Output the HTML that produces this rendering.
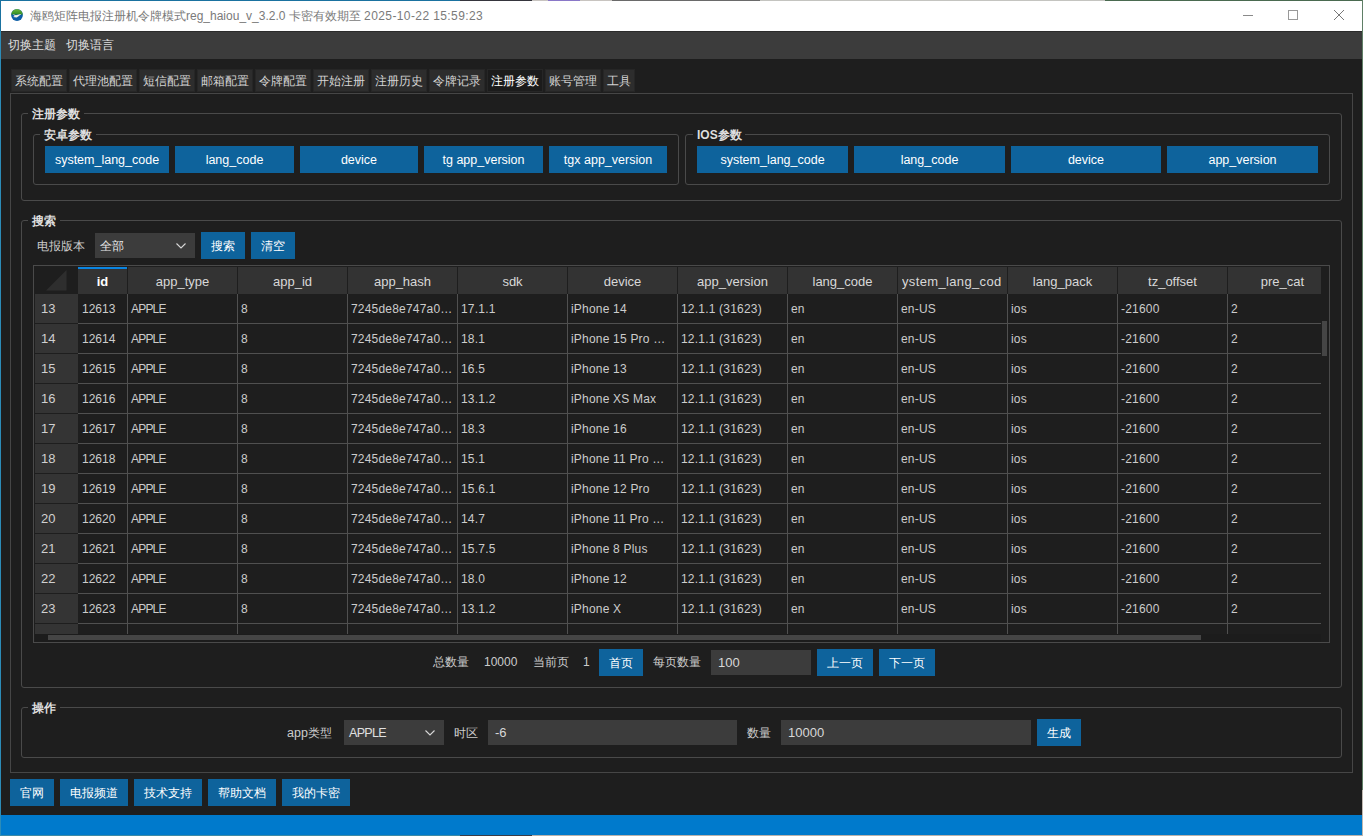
<!DOCTYPE html>
<html><head><meta charset="utf-8"><style>
html,body{margin:0;padding:0;width:1363px;height:836px;overflow:hidden;background:#1e1e1e}
body{position:relative;font-family:"Liberation Sans",sans-serif;font-size:12px;color:#cccccc}
div{position:absolute;box-sizing:border-box}
.t{white-space:nowrap;line-height:14px}
.c{text-align:center;white-space:nowrap}
</style></head><body>
<div style="left:0px;top:0px;width:1363px;height:836px;background:#2c8cb8"></div>
<div style="left:0px;top:0px;width:1px;height:31px;background:#1a72a0"></div>
<div style="left:0px;top:0px;width:460px;height:1px;background:#1a72a0"></div>
<div style="left:460px;top:0px;width:72px;height:1px;background:#35353d"></div>
<div style="left:532px;top:0px;width:16px;height:1px;background:#c8c4c0"></div>
<div style="left:548px;top:0px;width:32px;height:1px;background:#8a78c8"></div>
<div style="left:580px;top:0px;width:32px;height:1px;background:#c8c4c0"></div>
<div style="left:612px;top:0px;width:148px;height:1px;background:#6a6a6a"></div>
<div style="left:760px;top:0px;width:345px;height:1px;background:#c4c4c0"></div>
<div style="left:1105px;top:0px;width:257px;height:1px;background:#4a6a50"></div>
<div style="left:1px;top:835px;width:459px;height:1px;background:#3c8aa6"></div>
<div style="left:460px;top:835px;width:72px;height:1px;background:#3c3c44"></div>
<div style="left:532px;top:835px;width:831px;height:1px;background:#b8b2ac"></div>
<div style="left:1px;top:1px;width:1361px;height:30px;background:#ffffff"></div>
<div style="left:1px;top:31px;width:1361px;height:1px;background:#2b2b2b"></div>
<div style="left:1px;top:32px;width:1361px;height:27px;background:#3c3c3c"></div>
<div style="left:1px;top:59px;width:1361px;height:756px;background:#1e1e1e"></div>
<div style="left:1px;top:815px;width:1361px;height:20px;background:#007acc"></div>
<div style="left:1362px;top:0px;width:1px;height:790px;background:#5f7f66"></div>
<div style="left:1362px;top:790px;width:1px;height:46px;background:#bfb8b0"></div>
<svg style="position:absolute;left:11px;top:9px" width="12" height="12" viewBox="0 0 12 12">
<defs><clipPath id="cc"><circle cx="6" cy="6" r="5.9"/></clipPath><linearGradient id="gg" x1="0" y1="0" x2="0" y2="1"><stop offset="0" stop-color="#6cb83c"/><stop offset="1" stop-color="#2e8a22"/></linearGradient></defs>
<g clip-path="url(#cc)"><rect width="12" height="12" fill="#0d5ea6"/><path d="M0 5.6 Q0.5 0 6 0 Q11.5 0 12 5.6 Z" fill="url(#gg)"/>
<path d="M1.6 5.0 L4.9 6.3 L10.6 4.8 L7.2 7.5 L5.7 8.6 L2.0 8.1 L3.8 7.1 Z" fill="#f8f4e6"/></g></svg>
<div class="t" style="left:30px;top:9px;color:#7a7a7a;font-size:12px">海鸥矩阵电报注册机令牌模式reg_haiou_v_3.2.0 卡密有效期至 <span style="letter-spacing:0.4px">2025-10-22 15:59:23</span></div>
<div style="left:1243px;top:15px;width:10px;height:1px;background:#8a8a8a"></div>
<div style="left:1288px;top:10px;width:10px;height:10px;border:1px solid #999"></div>
<svg style="position:absolute;left:1334px;top:10px" width="10" height="10" viewBox="0 0 10 10"><path d="M0 0 L10 10 M10 0 L0 10" stroke="#777" stroke-width="1"/></svg>
<div class="t" style="left:8px;top:38px;color:#e0e0e0">切换主题</div>
<div class="t" style="left:66px;top:38px;color:#e0e0e0">切换语言</div>
<div class="c" style="left:11px;top:69px;width:56px;height:23px;line-height:23px;background:#2d2d2d;border:1px solid #262626;line-height:22px;color:#d4d4d4">系统配置</div>
<div class="c" style="left:69px;top:69px;width:68px;height:23px;line-height:23px;background:#2d2d2d;border:1px solid #262626;line-height:22px;color:#d4d4d4">代理池配置</div>
<div class="c" style="left:139px;top:69px;width:56px;height:23px;line-height:23px;background:#2d2d2d;border:1px solid #262626;line-height:22px;color:#d4d4d4">短信配置</div>
<div class="c" style="left:197px;top:69px;width:56px;height:23px;line-height:23px;background:#2d2d2d;border:1px solid #262626;line-height:22px;color:#d4d4d4">邮箱配置</div>
<div class="c" style="left:255px;top:69px;width:56px;height:23px;line-height:23px;background:#2d2d2d;border:1px solid #262626;line-height:22px;color:#d4d4d4">令牌配置</div>
<div class="c" style="left:313px;top:69px;width:56px;height:23px;line-height:23px;background:#2d2d2d;border:1px solid #262626;line-height:22px;color:#d4d4d4">开始注册</div>
<div class="c" style="left:371px;top:69px;width:56px;height:23px;line-height:23px;background:#2d2d2d;border:1px solid #262626;line-height:22px;color:#d4d4d4">注册历史</div>
<div class="c" style="left:429px;top:69px;width:56px;height:23px;line-height:23px;background:#2d2d2d;border:1px solid #262626;line-height:22px;color:#d4d4d4">令牌记录</div>
<div class="c" style="left:487px;top:69px;width:56px;height:23px;line-height:23px;background:#1b1b1b;border:1px solid #262626;line-height:22px;color:#ffffff">注册参数</div>
<div class="c" style="left:545px;top:69px;width:56px;height:23px;line-height:23px;background:#2d2d2d;border:1px solid #262626;line-height:22px;color:#d4d4d4">账号管理</div>
<div class="c" style="left:603px;top:69px;width:32px;height:23px;line-height:23px;background:#2d2d2d;border:1px solid #262626;line-height:22px;color:#d4d4d4">工具</div>
<div style="left:10px;top:93px;width:1343px;height:680px;border:1px solid #464646"></div>
<div style="left:21px;top:113px;width:1321px;height:88px;border:1px solid #4a4a4a;border-radius:3px"></div>
<div style="left:28px;top:111px;width:56px;height:4px;background:#1e1e1e"></div>
<div class="t" style="left:32px;top:107px;color:#dedede;font-weight:bold;">注册参数</div>
<div style="left:33px;top:134px;width:646px;height:51px;border:1px solid #4a4a4a;border-radius:3px"></div>
<div style="left:40px;top:132px;width:56px;height:4px;background:#1e1e1e"></div>
<div class="t" style="left:44px;top:128px;color:#dedede;font-weight:bold;">安卓参数</div>
<div style="left:685px;top:134px;width:645px;height:51px;border:1px solid #4a4a4a;border-radius:3px"></div>
<div style="left:693px;top:132px;width:52px;height:4px;background:#1e1e1e"></div>
<div class="t" style="left:697px;top:128px;color:#dedede;font-weight:bold;"><span style="font-size:12px;font-weight:bold">IOS</span>参数</div>
<div class="c" style="left:45px;top:146px;width:124px;height:27px;line-height:27px;background:#0e639c;color:#fff;font-size:12.5px;line-height:29px">system_lang_code</div>
<div class="c" style="left:175px;top:146px;width:119px;height:27px;line-height:27px;background:#0e639c;color:#fff;font-size:12.5px;line-height:29px">lang_code</div>
<div class="c" style="left:300px;top:146px;width:118px;height:27px;line-height:27px;background:#0e639c;color:#fff;font-size:12.5px;line-height:29px">device</div>
<div class="c" style="left:424px;top:146px;width:119px;height:27px;line-height:27px;background:#0e639c;color:#fff;font-size:12.5px;line-height:29px">tg app_version</div>
<div class="c" style="left:549px;top:146px;width:118px;height:27px;line-height:27px;background:#0e639c;color:#fff;font-size:12.5px;line-height:29px">tgx app_version</div>
<div class="c" style="left:697px;top:146px;width:151px;height:27px;line-height:27px;background:#0e639c;color:#fff;font-size:12.5px;line-height:29px">system_lang_code</div>
<div class="c" style="left:854px;top:146px;width:151px;height:27px;line-height:27px;background:#0e639c;color:#fff;font-size:12.5px;line-height:29px">lang_code</div>
<div class="c" style="left:1011px;top:146px;width:150px;height:27px;line-height:27px;background:#0e639c;color:#fff;font-size:12.5px;line-height:29px">device</div>
<div class="c" style="left:1167px;top:146px;width:151px;height:27px;line-height:27px;background:#0e639c;color:#fff;font-size:12.5px;line-height:29px">app_version</div>
<div style="left:21px;top:220px;width:1321px;height:468px;border:1px solid #4a4a4a;border-radius:3px"></div>
<div style="left:28px;top:218px;width:32px;height:4px;background:#1e1e1e"></div>
<div class="t" style="left:32px;top:214px;color:#dedede;font-weight:bold;">搜索</div>
<div class="t" style="left:37px;top:239px;">电报版本</div>
<div style="left:95px;top:233px;width:100px;height:25px;background:#3c3c3c"></div>
<div class="t" style="left:100px;top:239px;color:#e8e8e8">全部</div>
<svg style="position:absolute;left:175px;top:242px" width="12" height="8" viewBox="0 0 12 8"><path d="M1.5 1.5 L6 6 L10.5 1.5" stroke="#d8d8d8" fill="none" stroke-width="1.1"/></svg>
<div class="c" style="left:201px;top:232px;width:44px;height:27px;line-height:27px;background:#0e639c;color:#fff;line-height:29px">搜索</div>
<div class="c" style="left:251px;top:232px;width:44px;height:27px;line-height:27px;background:#0e639c;color:#fff;line-height:29px">清空</div>
<div style="left:33px;top:265px;width:1297px;height:378px;border:1px solid #4a4a4a"></div>
<div style="left:35px;top:267px;width:43px;height:27px;background:#1e1e1e"></div>
<svg style="position:absolute;left:46px;top:270px" width="21" height="21" viewBox="0 0 21 21"><path d="M0 20.5 L20.5 0 L20.5 20.5 Z" fill="#2e2e2e"/></svg>
<div style="left:78px;top:267px;width:49px;height:27px;background:#333333;color:#d8d8d8;font-size:13px;font-weight:bold;color:#fff;overflow:hidden"><div style="left:0;width:49px;top:0;height:27px;line-height:30px;display:flex;justify-content:center;white-space:nowrap">id</div></div>
<div style="left:128px;top:267px;width:109px;height:27px;background:#333333;color:#d8d8d8;font-size:13px;overflow:hidden"><div style="left:0;width:109px;top:0;height:27px;line-height:30px;display:flex;justify-content:center;white-space:nowrap">app_type</div></div>
<div style="left:238px;top:267px;width:109px;height:27px;background:#333333;color:#d8d8d8;font-size:13px;overflow:hidden"><div style="left:0;width:109px;top:0;height:27px;line-height:30px;display:flex;justify-content:center;white-space:nowrap">app_id</div></div>
<div style="left:348px;top:267px;width:109px;height:27px;background:#333333;color:#d8d8d8;font-size:13px;overflow:hidden"><div style="left:0;width:109px;top:0;height:27px;line-height:30px;display:flex;justify-content:center;white-space:nowrap">app_hash</div></div>
<div style="left:458px;top:267px;width:109px;height:27px;background:#333333;color:#d8d8d8;font-size:13px;overflow:hidden"><div style="left:0;width:109px;top:0;height:27px;line-height:30px;display:flex;justify-content:center;white-space:nowrap">sdk</div></div>
<div style="left:568px;top:267px;width:109px;height:27px;background:#333333;color:#d8d8d8;font-size:13px;overflow:hidden"><div style="left:0;width:109px;top:0;height:27px;line-height:30px;display:flex;justify-content:center;white-space:nowrap">device</div></div>
<div style="left:678px;top:267px;width:109px;height:27px;background:#333333;color:#d8d8d8;font-size:13px;overflow:hidden"><div style="left:0;width:109px;top:0;height:27px;line-height:30px;display:flex;justify-content:center;white-space:nowrap">app_version</div></div>
<div style="left:788px;top:267px;width:109px;height:27px;background:#333333;color:#d8d8d8;font-size:13px;overflow:hidden"><div style="left:0;width:109px;top:0;height:27px;line-height:30px;display:flex;justify-content:center;white-space:nowrap">lang_code</div></div>
<div style="left:898px;top:267px;width:109px;height:27px;background:#333333;color:#d8d8d8;font-size:13px;"></div>
<div style="left:902px;top:267px;width:99px;height:27px;line-height:30px;background:#333333;color:#d8d8d8;font-size:13px;background:none;overflow:hidden;white-space:nowrap;letter-spacing:0.35px">ystem_lang_code</div>
<div style="left:1008px;top:267px;width:109px;height:27px;background:#333333;color:#d8d8d8;font-size:13px;overflow:hidden"><div style="left:0;width:109px;top:0;height:27px;line-height:30px;display:flex;justify-content:center;white-space:nowrap">lang_pack</div></div>
<div style="left:1118px;top:267px;width:109px;height:27px;background:#333333;color:#d8d8d8;font-size:13px;overflow:hidden"><div style="left:0;width:109px;top:0;height:27px;line-height:30px;display:flex;justify-content:center;white-space:nowrap">tz_offset</div></div>
<div style="left:1228px;top:267px;width:93px;height:27px;background:#333333;color:#d8d8d8;font-size:13px;overflow:hidden"><div style="left:0;width:109px;top:0;height:27px;line-height:30px;display:flex;justify-content:center;white-space:nowrap">pre_cat</div></div>
<div style="left:78px;top:267px;width:49px;height:2px;background:#0a84e0"></div>
<div style="left:35px;top:294px;width:43px;height:29px;background:#343434"></div>
<div class="t" style="left:41px;top:302px;font-size:13px;color:#d0d0d0">13</div>
<div class="t" style="left:82px;top:302px;">12613</div>
<div class="t" style="left:131px;top:302px;letter-spacing:0.2px"><span style="letter-spacing:-0.8px">APPLE</span></div>
<div class="t" style="left:241px;top:302px;">8</div>
<div class="t" style="left:351px;top:302px;letter-spacing:0.2px">7245de8e747a0…</div>
<div class="t" style="left:461px;top:302px;letter-spacing:0.2px">17.1.1</div>
<div class="t" style="left:571px;top:302px;letter-spacing:0.2px">iPhone 14</div>
<div class="t" style="left:681px;top:302px;letter-spacing:0.2px">12.1.1 (31623)</div>
<div class="t" style="left:791px;top:302px;letter-spacing:0.2px">en</div>
<div class="t" style="left:901px;top:302px;letter-spacing:0.2px">en-US</div>
<div class="t" style="left:1011px;top:302px;letter-spacing:0.2px">ios</div>
<div class="t" style="left:1121px;top:302px;letter-spacing:0.2px">-21600</div>
<div class="t" style="left:1231px;top:302px;">2</div>
<div style="left:78px;top:323px;width:1243px;height:1px;background:#505050"></div>
<div style="left:35px;top:324px;width:43px;height:29px;background:#343434"></div>
<div class="t" style="left:41px;top:332px;font-size:13px;color:#d0d0d0">14</div>
<div class="t" style="left:82px;top:332px;">12614</div>
<div class="t" style="left:131px;top:332px;letter-spacing:0.2px"><span style="letter-spacing:-0.8px">APPLE</span></div>
<div class="t" style="left:241px;top:332px;">8</div>
<div class="t" style="left:351px;top:332px;letter-spacing:0.2px">7245de8e747a0…</div>
<div class="t" style="left:461px;top:332px;letter-spacing:0.2px">18.1</div>
<div class="t" style="left:571px;top:332px;letter-spacing:0.2px">iPhone 15 Pro …</div>
<div class="t" style="left:681px;top:332px;letter-spacing:0.2px">12.1.1 (31623)</div>
<div class="t" style="left:791px;top:332px;letter-spacing:0.2px">en</div>
<div class="t" style="left:901px;top:332px;letter-spacing:0.2px">en-US</div>
<div class="t" style="left:1011px;top:332px;letter-spacing:0.2px">ios</div>
<div class="t" style="left:1121px;top:332px;letter-spacing:0.2px">-21600</div>
<div class="t" style="left:1231px;top:332px;">2</div>
<div style="left:78px;top:353px;width:1243px;height:1px;background:#505050"></div>
<div style="left:35px;top:354px;width:43px;height:29px;background:#343434"></div>
<div class="t" style="left:41px;top:362px;font-size:13px;color:#d0d0d0">15</div>
<div class="t" style="left:82px;top:362px;">12615</div>
<div class="t" style="left:131px;top:362px;letter-spacing:0.2px"><span style="letter-spacing:-0.8px">APPLE</span></div>
<div class="t" style="left:241px;top:362px;">8</div>
<div class="t" style="left:351px;top:362px;letter-spacing:0.2px">7245de8e747a0…</div>
<div class="t" style="left:461px;top:362px;letter-spacing:0.2px">16.5</div>
<div class="t" style="left:571px;top:362px;letter-spacing:0.2px">iPhone 13</div>
<div class="t" style="left:681px;top:362px;letter-spacing:0.2px">12.1.1 (31623)</div>
<div class="t" style="left:791px;top:362px;letter-spacing:0.2px">en</div>
<div class="t" style="left:901px;top:362px;letter-spacing:0.2px">en-US</div>
<div class="t" style="left:1011px;top:362px;letter-spacing:0.2px">ios</div>
<div class="t" style="left:1121px;top:362px;letter-spacing:0.2px">-21600</div>
<div class="t" style="left:1231px;top:362px;">2</div>
<div style="left:78px;top:383px;width:1243px;height:1px;background:#505050"></div>
<div style="left:35px;top:384px;width:43px;height:29px;background:#343434"></div>
<div class="t" style="left:41px;top:392px;font-size:13px;color:#d0d0d0">16</div>
<div class="t" style="left:82px;top:392px;">12616</div>
<div class="t" style="left:131px;top:392px;letter-spacing:0.2px"><span style="letter-spacing:-0.8px">APPLE</span></div>
<div class="t" style="left:241px;top:392px;">8</div>
<div class="t" style="left:351px;top:392px;letter-spacing:0.2px">7245de8e747a0…</div>
<div class="t" style="left:461px;top:392px;letter-spacing:0.2px">13.1.2</div>
<div class="t" style="left:571px;top:392px;letter-spacing:0.2px">iPhone XS Max</div>
<div class="t" style="left:681px;top:392px;letter-spacing:0.2px">12.1.1 (31623)</div>
<div class="t" style="left:791px;top:392px;letter-spacing:0.2px">en</div>
<div class="t" style="left:901px;top:392px;letter-spacing:0.2px">en-US</div>
<div class="t" style="left:1011px;top:392px;letter-spacing:0.2px">ios</div>
<div class="t" style="left:1121px;top:392px;letter-spacing:0.2px">-21600</div>
<div class="t" style="left:1231px;top:392px;">2</div>
<div style="left:78px;top:413px;width:1243px;height:1px;background:#505050"></div>
<div style="left:35px;top:414px;width:43px;height:29px;background:#343434"></div>
<div class="t" style="left:41px;top:422px;font-size:13px;color:#d0d0d0">17</div>
<div class="t" style="left:82px;top:422px;">12617</div>
<div class="t" style="left:131px;top:422px;letter-spacing:0.2px"><span style="letter-spacing:-0.8px">APPLE</span></div>
<div class="t" style="left:241px;top:422px;">8</div>
<div class="t" style="left:351px;top:422px;letter-spacing:0.2px">7245de8e747a0…</div>
<div class="t" style="left:461px;top:422px;letter-spacing:0.2px">18.3</div>
<div class="t" style="left:571px;top:422px;letter-spacing:0.2px">iPhone 16</div>
<div class="t" style="left:681px;top:422px;letter-spacing:0.2px">12.1.1 (31623)</div>
<div class="t" style="left:791px;top:422px;letter-spacing:0.2px">en</div>
<div class="t" style="left:901px;top:422px;letter-spacing:0.2px">en-US</div>
<div class="t" style="left:1011px;top:422px;letter-spacing:0.2px">ios</div>
<div class="t" style="left:1121px;top:422px;letter-spacing:0.2px">-21600</div>
<div class="t" style="left:1231px;top:422px;">2</div>
<div style="left:78px;top:443px;width:1243px;height:1px;background:#505050"></div>
<div style="left:35px;top:444px;width:43px;height:29px;background:#343434"></div>
<div class="t" style="left:41px;top:452px;font-size:13px;color:#d0d0d0">18</div>
<div class="t" style="left:82px;top:452px;">12618</div>
<div class="t" style="left:131px;top:452px;letter-spacing:0.2px"><span style="letter-spacing:-0.8px">APPLE</span></div>
<div class="t" style="left:241px;top:452px;">8</div>
<div class="t" style="left:351px;top:452px;letter-spacing:0.2px">7245de8e747a0…</div>
<div class="t" style="left:461px;top:452px;letter-spacing:0.2px">15.1</div>
<div class="t" style="left:571px;top:452px;letter-spacing:0.2px">iPhone 11 Pro …</div>
<div class="t" style="left:681px;top:452px;letter-spacing:0.2px">12.1.1 (31623)</div>
<div class="t" style="left:791px;top:452px;letter-spacing:0.2px">en</div>
<div class="t" style="left:901px;top:452px;letter-spacing:0.2px">en-US</div>
<div class="t" style="left:1011px;top:452px;letter-spacing:0.2px">ios</div>
<div class="t" style="left:1121px;top:452px;letter-spacing:0.2px">-21600</div>
<div class="t" style="left:1231px;top:452px;">2</div>
<div style="left:78px;top:473px;width:1243px;height:1px;background:#505050"></div>
<div style="left:35px;top:474px;width:43px;height:29px;background:#343434"></div>
<div class="t" style="left:41px;top:482px;font-size:13px;color:#d0d0d0">19</div>
<div class="t" style="left:82px;top:482px;">12619</div>
<div class="t" style="left:131px;top:482px;letter-spacing:0.2px"><span style="letter-spacing:-0.8px">APPLE</span></div>
<div class="t" style="left:241px;top:482px;">8</div>
<div class="t" style="left:351px;top:482px;letter-spacing:0.2px">7245de8e747a0…</div>
<div class="t" style="left:461px;top:482px;letter-spacing:0.2px">15.6.1</div>
<div class="t" style="left:571px;top:482px;letter-spacing:0.2px">iPhone 12 Pro</div>
<div class="t" style="left:681px;top:482px;letter-spacing:0.2px">12.1.1 (31623)</div>
<div class="t" style="left:791px;top:482px;letter-spacing:0.2px">en</div>
<div class="t" style="left:901px;top:482px;letter-spacing:0.2px">en-US</div>
<div class="t" style="left:1011px;top:482px;letter-spacing:0.2px">ios</div>
<div class="t" style="left:1121px;top:482px;letter-spacing:0.2px">-21600</div>
<div class="t" style="left:1231px;top:482px;">2</div>
<div style="left:78px;top:503px;width:1243px;height:1px;background:#505050"></div>
<div style="left:35px;top:504px;width:43px;height:29px;background:#343434"></div>
<div class="t" style="left:41px;top:512px;font-size:13px;color:#d0d0d0">20</div>
<div class="t" style="left:82px;top:512px;">12620</div>
<div class="t" style="left:131px;top:512px;letter-spacing:0.2px"><span style="letter-spacing:-0.8px">APPLE</span></div>
<div class="t" style="left:241px;top:512px;">8</div>
<div class="t" style="left:351px;top:512px;letter-spacing:0.2px">7245de8e747a0…</div>
<div class="t" style="left:461px;top:512px;letter-spacing:0.2px">14.7</div>
<div class="t" style="left:571px;top:512px;letter-spacing:0.2px">iPhone 11 Pro …</div>
<div class="t" style="left:681px;top:512px;letter-spacing:0.2px">12.1.1 (31623)</div>
<div class="t" style="left:791px;top:512px;letter-spacing:0.2px">en</div>
<div class="t" style="left:901px;top:512px;letter-spacing:0.2px">en-US</div>
<div class="t" style="left:1011px;top:512px;letter-spacing:0.2px">ios</div>
<div class="t" style="left:1121px;top:512px;letter-spacing:0.2px">-21600</div>
<div class="t" style="left:1231px;top:512px;">2</div>
<div style="left:78px;top:533px;width:1243px;height:1px;background:#505050"></div>
<div style="left:35px;top:534px;width:43px;height:29px;background:#343434"></div>
<div class="t" style="left:41px;top:542px;font-size:13px;color:#d0d0d0">21</div>
<div class="t" style="left:82px;top:542px;">12621</div>
<div class="t" style="left:131px;top:542px;letter-spacing:0.2px"><span style="letter-spacing:-0.8px">APPLE</span></div>
<div class="t" style="left:241px;top:542px;">8</div>
<div class="t" style="left:351px;top:542px;letter-spacing:0.2px">7245de8e747a0…</div>
<div class="t" style="left:461px;top:542px;letter-spacing:0.2px">15.7.5</div>
<div class="t" style="left:571px;top:542px;letter-spacing:0.2px">iPhone 8 Plus</div>
<div class="t" style="left:681px;top:542px;letter-spacing:0.2px">12.1.1 (31623)</div>
<div class="t" style="left:791px;top:542px;letter-spacing:0.2px">en</div>
<div class="t" style="left:901px;top:542px;letter-spacing:0.2px">en-US</div>
<div class="t" style="left:1011px;top:542px;letter-spacing:0.2px">ios</div>
<div class="t" style="left:1121px;top:542px;letter-spacing:0.2px">-21600</div>
<div class="t" style="left:1231px;top:542px;">2</div>
<div style="left:78px;top:563px;width:1243px;height:1px;background:#505050"></div>
<div style="left:35px;top:564px;width:43px;height:29px;background:#343434"></div>
<div class="t" style="left:41px;top:572px;font-size:13px;color:#d0d0d0">22</div>
<div class="t" style="left:82px;top:572px;">12622</div>
<div class="t" style="left:131px;top:572px;letter-spacing:0.2px"><span style="letter-spacing:-0.8px">APPLE</span></div>
<div class="t" style="left:241px;top:572px;">8</div>
<div class="t" style="left:351px;top:572px;letter-spacing:0.2px">7245de8e747a0…</div>
<div class="t" style="left:461px;top:572px;letter-spacing:0.2px">18.0</div>
<div class="t" style="left:571px;top:572px;letter-spacing:0.2px">iPhone 12</div>
<div class="t" style="left:681px;top:572px;letter-spacing:0.2px">12.1.1 (31623)</div>
<div class="t" style="left:791px;top:572px;letter-spacing:0.2px">en</div>
<div class="t" style="left:901px;top:572px;letter-spacing:0.2px">en-US</div>
<div class="t" style="left:1011px;top:572px;letter-spacing:0.2px">ios</div>
<div class="t" style="left:1121px;top:572px;letter-spacing:0.2px">-21600</div>
<div class="t" style="left:1231px;top:572px;">2</div>
<div style="left:78px;top:593px;width:1243px;height:1px;background:#505050"></div>
<div style="left:35px;top:594px;width:43px;height:29px;background:#343434"></div>
<div class="t" style="left:41px;top:602px;font-size:13px;color:#d0d0d0">23</div>
<div class="t" style="left:82px;top:602px;">12623</div>
<div class="t" style="left:131px;top:602px;letter-spacing:0.2px"><span style="letter-spacing:-0.8px">APPLE</span></div>
<div class="t" style="left:241px;top:602px;">8</div>
<div class="t" style="left:351px;top:602px;letter-spacing:0.2px">7245de8e747a0…</div>
<div class="t" style="left:461px;top:602px;letter-spacing:0.2px">13.1.2</div>
<div class="t" style="left:571px;top:602px;letter-spacing:0.2px">iPhone X</div>
<div class="t" style="left:681px;top:602px;letter-spacing:0.2px">12.1.1 (31623)</div>
<div class="t" style="left:791px;top:602px;letter-spacing:0.2px">en</div>
<div class="t" style="left:901px;top:602px;letter-spacing:0.2px">en-US</div>
<div class="t" style="left:1011px;top:602px;letter-spacing:0.2px">ios</div>
<div class="t" style="left:1121px;top:602px;letter-spacing:0.2px">-21600</div>
<div class="t" style="left:1231px;top:602px;">2</div>
<div style="left:78px;top:623px;width:1243px;height:1px;background:#505050"></div>
<div style="left:35px;top:624px;width:43px;height:10px;background:#343434"></div>
<div style="left:127px;top:294px;width:1px;height:340px;background:#505050"></div>
<div style="left:237px;top:294px;width:1px;height:340px;background:#505050"></div>
<div style="left:347px;top:294px;width:1px;height:340px;background:#505050"></div>
<div style="left:457px;top:294px;width:1px;height:340px;background:#505050"></div>
<div style="left:567px;top:294px;width:1px;height:340px;background:#505050"></div>
<div style="left:677px;top:294px;width:1px;height:340px;background:#505050"></div>
<div style="left:787px;top:294px;width:1px;height:340px;background:#505050"></div>
<div style="left:897px;top:294px;width:1px;height:340px;background:#505050"></div>
<div style="left:1007px;top:294px;width:1px;height:340px;background:#505050"></div>
<div style="left:1117px;top:294px;width:1px;height:340px;background:#505050"></div>
<div style="left:1227px;top:294px;width:1px;height:340px;background:#505050"></div>
<div style="left:35px;top:634px;width:1286px;height:8px;background:#1c1c1c"></div>
<div style="left:48px;top:635px;width:1153px;height:5px;background:#454545"></div>
<div style="left:1322px;top:321px;width:5px;height:35px;background:#454545"></div>
<div class="t" style="left:433px;top:655px;">总数量</div>
<div class="t" style="left:484px;top:655px;">10000</div>
<div class="t" style="left:533px;top:655px;">当前页</div>
<div class="t" style="left:583px;top:655px;">1</div>
<div class="c" style="left:599px;top:649px;width:44px;height:27px;line-height:27px;background:#0e639c;color:#fff;line-height:29px">首页</div>
<div class="t" style="left:653px;top:655px;">每页数量</div>
<div style="left:711px;top:650px;width:100px;height:25px;background:#3c3c3c"></div>
<div class="t" style="left:718px;top:656px;color:#d8d8d8;font-size:13px">100</div>
<div class="c" style="left:817px;top:649px;width:56px;height:27px;line-height:27px;background:#0e639c;color:#fff;line-height:29px">上一页</div>
<div class="c" style="left:879px;top:649px;width:56px;height:27px;line-height:27px;background:#0e639c;color:#fff;line-height:29px">下一页</div>
<div style="left:21px;top:707px;width:1321px;height:51px;border:1px solid #4a4a4a;border-radius:3px"></div>
<div style="left:28px;top:705px;width:32px;height:4px;background:#1e1e1e"></div>
<div class="t" style="left:32px;top:701px;color:#dedede;font-weight:bold;">操作</div>
<div class="t" style="left:287px;top:726px;"><span style="font-size:12.5px">app</span>类型</div>
<div style="left:344px;top:720px;width:100px;height:25px;background:#3c3c3c"></div>
<div class="t" style="left:349px;top:726px;color:#e0e0e0;font-size:12.5px;letter-spacing:-0.7px">APPLE</div>
<svg style="position:absolute;left:424px;top:729px" width="12" height="8" viewBox="0 0 12 8"><path d="M1.5 1.5 L6 6 L10.5 1.5" stroke="#d8d8d8" fill="none" stroke-width="1.1"/></svg>
<div class="t" style="left:454px;top:726px;">时区</div>
<div style="left:488px;top:720px;width:249px;height:25px;background:#3c3c3c"></div>
<div class="t" style="left:495px;top:726px;color:#d8d8d8;font-size:13px">-6</div>
<div class="t" style="left:747px;top:726px;">数量</div>
<div style="left:781px;top:720px;width:250px;height:25px;background:#3c3c3c"></div>
<div class="t" style="left:788px;top:726px;color:#d8d8d8;font-size:13px">10000</div>
<div class="c" style="left:1037px;top:719px;width:44px;height:27px;line-height:27px;background:#0e639c;color:#fff;line-height:29px">生成</div>
<div class="c" style="left:10px;top:779px;width:44px;height:27px;line-height:27px;background:#0e639c;color:#fff;line-height:29px">官网</div>
<div class="c" style="left:60px;top:779px;width:68px;height:27px;line-height:27px;background:#0e639c;color:#fff;line-height:29px">电报频道</div>
<div class="c" style="left:134px;top:779px;width:68px;height:27px;line-height:27px;background:#0e639c;color:#fff;line-height:29px">技术支持</div>
<div class="c" style="left:208px;top:779px;width:68px;height:27px;line-height:27px;background:#0e639c;color:#fff;line-height:29px">帮助文档</div>
<div class="c" style="left:282px;top:779px;width:68px;height:27px;line-height:27px;background:#0e639c;color:#fff;line-height:29px">我的卡密</div>
</body></html>
